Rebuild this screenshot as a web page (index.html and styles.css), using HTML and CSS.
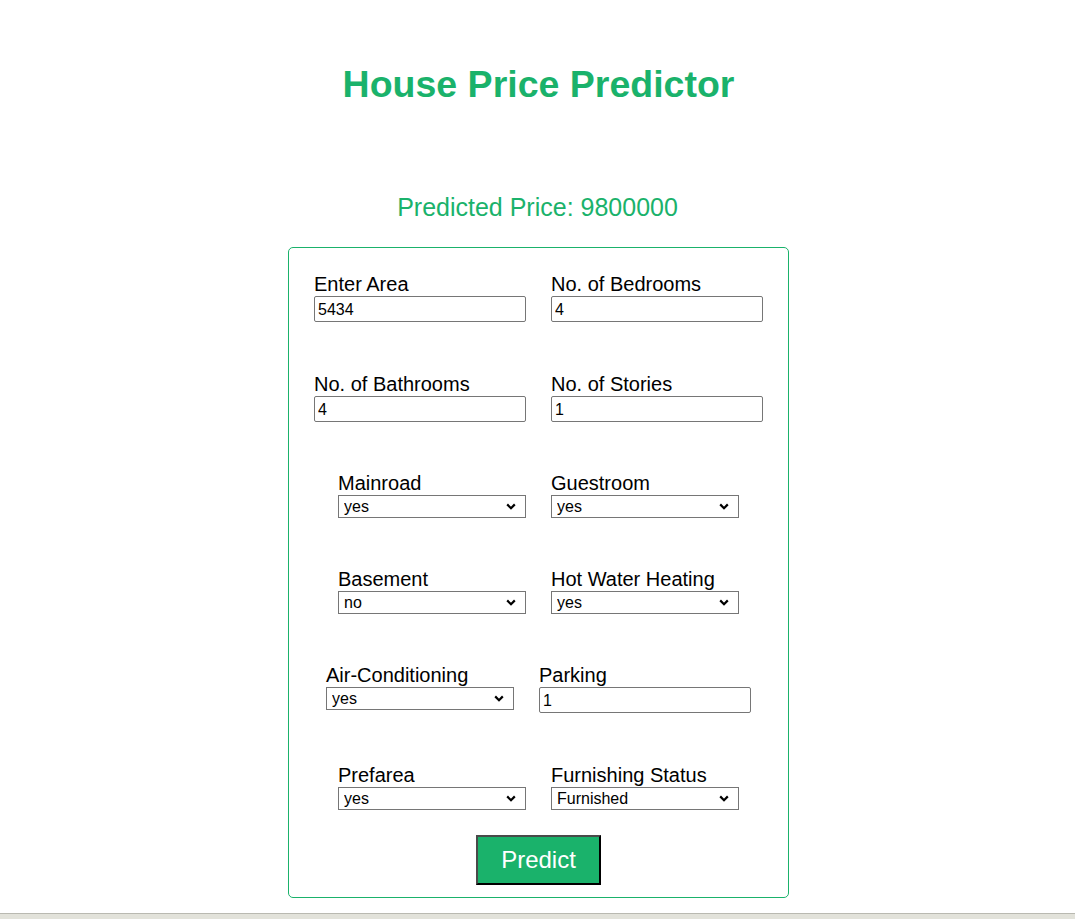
FILE: index.html
```html
<!DOCTYPE html>
<html>
<head>
<meta charset="utf-8">
<title>House Price Predictor</title>
<link rel="stylesheet" href="styles.css">
</head>
<body>
<div class="page">
  <h1 class="title">House Price Predictor</h1>
  <div class="result">Predicted Price: 9800000</div>
  <form class="card">
    <div class="row row-1">
      <div class="field"><label class="lbl">Enter Area</label><input class="txt" type="text" value="5434"></div>
      <div class="field"><label class="lbl">No. of Bedrooms</label><input class="txt" type="text" value="4"></div>
    </div>
    <div class="row row-2">
      <div class="field"><label class="lbl">No. of Bathrooms</label><input class="txt" type="text" value="4"></div>
      <div class="field"><label class="lbl">No. of Stories</label><input class="txt" type="text" value="1"></div>
    </div>
    <div class="row row-3">
      <div class="field"><label class="lbl">Mainroad</label><select class="sel"><option>yes</option><option>no</option></select></div>
      <div class="field"><label class="lbl">Guestroom</label><select class="sel"><option>yes</option><option>no</option></select></div>
    </div>
    <div class="row row-4">
      <div class="field"><label class="lbl">Basement</label><select class="sel"><option>no</option><option>yes</option></select></div>
      <div class="field"><label class="lbl">Hot Water Heating</label><select class="sel"><option>yes</option><option>no</option></select></div>
    </div>
    <div class="row row-5">
      <div class="field"><label class="lbl">Air-Conditioning</label><select class="sel"><option>yes</option><option>no</option></select></div>
      <div class="field"><label class="lbl">Parking</label><input class="txt" type="text" value="1"></div>
    </div>
    <div class="row row-6">
      <div class="field"><label class="lbl">Prefarea</label><select class="sel"><option>yes</option><option>no</option></select></div>
      <div class="field"><label class="lbl">Furnishing Status</label><select class="sel"><option>Furnished</option><option>Semi-Furnished</option><option>Unfurnished</option></select></div>
    </div>
    <div class="actions">
      <button class="btn" type="button">Predict</button>
    </div>
  </form>
</div>
<div class="strip"></div>
</body>
</html>
```

FILE: styles.css
```css
html, body {
  margin: 0;
  padding: 0;
  background: #ffffff;
}
body {
  font-family: "Liberation Sans", Arial, sans-serif;
  color: #000;
}
.page {
  display: flex;
  flex-direction: column;
  align-items: center;
  padding-left: 2px;
}
.title {
  margin: 63px 0 0 0;
  font-size: 37.5px;
  font-weight: bold;
  color: #1ab26b;
  line-height: 42px;
}
.result {
  margin-top: 88px;
  margin-right: 2px;
  font-size: 25px;
  line-height: 29px;
  color: #1ab26b;
}
.card {
  margin-top: 25px;
  width: 499px;
  border: 1px solid #1ab26b;
  border-radius: 5px;
  padding: 25px 0 12px 0;
  display: flex;
  flex-direction: column;
}
.row {
  display: flex;
  justify-content: center;
  align-items: flex-start;
  gap: 25px;
  margin-bottom: 50px;
}
.row-1, .row-5 {
  margin-bottom: 51px;
}
.row-6 {
  margin-bottom: 25px;
}
.field {
  display: flex;
  flex-direction: column;
}
.lbl {
  display: block;
  font-size: 20px;
  line-height: 23px;
}
.txt {
  box-sizing: border-box;
  width: 212px;
  height: 26px;
  margin: 0;
  padding: 2px 3px 0 3px;
  border: 1px solid #767676;
  border-radius: 2px;
  font-family: "Liberation Sans", Arial, sans-serif;
  font-size: 16px;
  color: #000;
  background: #fff;
}
.sel {
  box-sizing: border-box;
  width: 188px;
  height: 23px;
  margin: 0;
  padding: 0 0 0 5px;
  border: 1px solid #767676;
  border-radius: 0;
  font-family: "Liberation Sans", Arial, sans-serif;
  font-size: 16px;
  color: #000;
  -webkit-appearance: none;
  appearance: none;
  background-color: #fff;
  background-image: url("data:image/svg+xml,%3Csvg xmlns='http://www.w3.org/2000/svg' width='10' height='7' viewBox='0 0 10 7'%3E%3Cpath d='M1.2 1.4 L5 5.2 L8.8 1.4' fill='none' stroke='%23000' stroke-width='2.2'/%3E%3C/svg%3E");
  background-repeat: no-repeat;
  background-position: right 9px center;
  background-size: 10px 7px;
}
.actions {
  display: flex;
  justify-content: center;
}
.btn {
  box-sizing: border-box;
  width: 125px;
  height: 50px;
  margin: 0;
  padding: 0;
  background: #1ab26b;
  color: #ffffff;
  font-family: "Liberation Sans", Arial, sans-serif;
  font-size: 24px;
  border-style: solid;
  border-width: 2px;
  border-color: #4a4a4a #000 #000 #4a4a4a;
  border-radius: 0;
}
.strip {
  position: fixed;
  left: 0;
  right: 0;
  bottom: 0;
  height: 5px;
  background: #e2e2da;
  border-top: 1px solid #b9b9b1;
}
```
